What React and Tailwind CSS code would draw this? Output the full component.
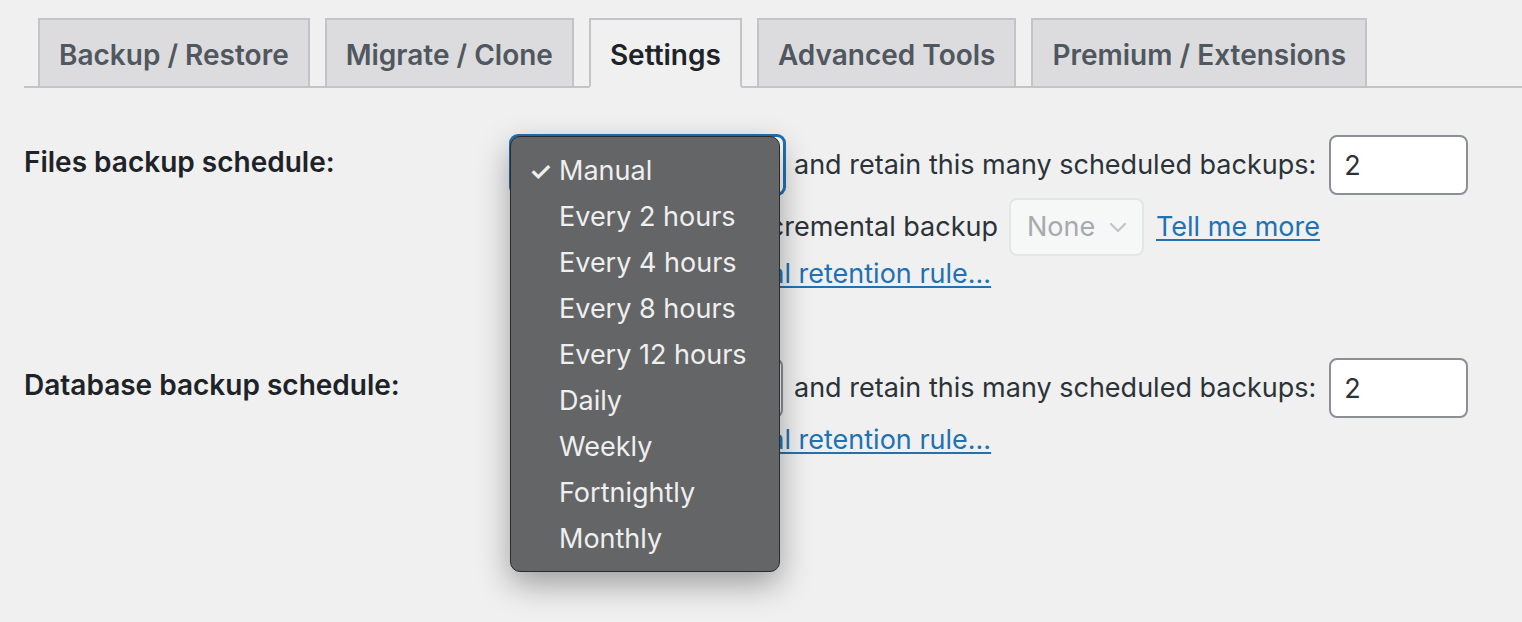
import React from 'react';

const tabs = ['Backup / Restore', 'Migrate / Clone', 'Settings', 'Advanced Tools', 'Premium / Extensions'];
const options = [
  'Manual',
  'Every 2 hours',
  'Every 4 hours',
  'Every 8 hours',
  'Every 12 hours',
  'Daily',
  'Weekly',
  'Fortnightly',
  'Monthly',
];

function Chevron({ className }) {
  return (
    <svg viewBox="0 0 24 24" fill="none" stroke="currentColor" strokeWidth="2.2" strokeLinecap="round" strokeLinejoin="round" className={className}>
      <polyline points="5 9 12 16 19 9" />
    </svg>
  );
}

function ScheduleSelect({ focused }) {
  return (
    <div
      className={
        focused
          ? 'flex h-[60px] w-[275px] shrink-0 items-center justify-between rounded-lg border-2 border-[#2271b1] bg-white pl-4 pr-3 shadow-[0_0_0_1px_#2271b1]'
          : 'flex h-[60px] w-[273px] shrink-0 items-center justify-between rounded-lg border-2 border-[#8c8f94] bg-white pl-4 pr-3'
      }
    >
      <span>Manual</span>
      <Chevron className="h-6 w-6 text-[#50575e]" />
    </div>
  );
}

function RetainInput() {
  return (
    <input
      type="text"
      defaultValue="2"
      readOnly
      className="ml-[13px] h-[60px] w-[139px] shrink-0 rounded-lg border-2 border-[#8c8f94] bg-white px-[13px] text-[27px] text-[#2c3338] outline-none"
    />
  );
}

function RetentionLink() {
  return (
    <a href="#" className="ml-[59px] text-[27px] leading-9 text-[#2271b1] underline underline-offset-[3px]">
      Add an additional retention rule...
    </a>
  );
}

export default function App() {
  return (
    <div className="relative min-h-[622px] w-full bg-[#f0f0f1] font-['Inter','Liberation_Sans',sans-serif] text-[27px] text-[#2c3338]">
      {/* Tabs */}
      <div className="ml-6 flex items-end gap-[15px] border-b-2 border-[#c3c4c7] pl-[14px] pt-[18px]">
        {tabs.map((t) =>
          t === 'Settings' ? (
            <div
              key={t}
              className="-mb-[2px] flex h-[70px] items-center border-2 border-[#c3c4c7] border-b-[#f0f0f1] bg-[#f0f0f1] px-[19px] pt-1 text-[28px] font-semibold text-[#1d2327]"
            >
              {t}
            </div>
          ) : (
            <div
              key={t}
              className="-mb-[2px] flex h-[70px] items-center border-2 border-[#c3c4c7] bg-[#dcdcde] px-[19px] pt-1 text-[28px] font-semibold text-[#50575e]"
            >
              {t}
            </div>
          )
        )}
      </div>

      {/* Schedule form */}
      <div className="pl-6 pt-[47px]">
        <div className="flex">
          <div className="w-[486px] shrink-0 pt-[9px] text-[28px] font-semibold leading-9 text-[#1d2327]">Files backup schedule:</div>
          <div className="flex flex-col">
            <div className="flex items-center">
              <ScheduleSelect focused />
              <span className="ml-[9px] whitespace-nowrap">and retain this many scheduled backups:</span>
              <RetainInput />
            </div>
            <div className="mt-[3px] flex h-[58px] items-center">
              <span className="ml-[19px] whitespace-nowrap">And then add an incremental backup</span>
              <div className="ml-[11px] flex h-[58px] w-[135px] items-center justify-between rounded-lg border-2 border-[#e4e5e7] bg-[#f6f7f7] pl-4 pr-3 text-[#a7aaad]">
                <span>None</span>
                <Chevron className="h-6 w-6 text-[#c3c4c7]" />
              </div>
              <a href="#" className="ml-3 text-[#2271b1] underline underline-offset-[3px]">
                Tell me more
              </a>
            </div>
            <RetentionLink />
          </div>
        </div>

        <div className="mt-[66px] flex">
          <div className="w-[486px] shrink-0 pt-[9px] text-[28px] font-semibold leading-9 text-[#1d2327]">Database backup schedule:</div>
          <div className="flex flex-col">
            <div className="flex items-center">
              <ScheduleSelect />
              <span className="ml-[11px] whitespace-nowrap">and retain this many scheduled backups:</span>
              <RetainInput />
            </div>
            <div className="mt-[2px]">
              <RetentionLink />
            </div>
          </div>
        </div>
      </div>

      {/* Open native select popup */}
      <div className="absolute left-[510px] top-[136px] w-[270px] rounded-[10px] border border-[#2b2b2b] bg-[#646566] pb-[9px] pt-[11px] shadow-[0_12px_32px_rgba(0,0,0,0.35)]">
        {options.map((o, i) => (
          <div key={o} className="relative flex h-[46px] items-center pl-[48px] text-[27px] text-[#efefef]">
            {i === 0 && <span className="absolute left-[18px] text-[26px] font-semibold">✓</span>}
            {o}
          </div>
        ))}
      </div>
    </div>
  );
}
